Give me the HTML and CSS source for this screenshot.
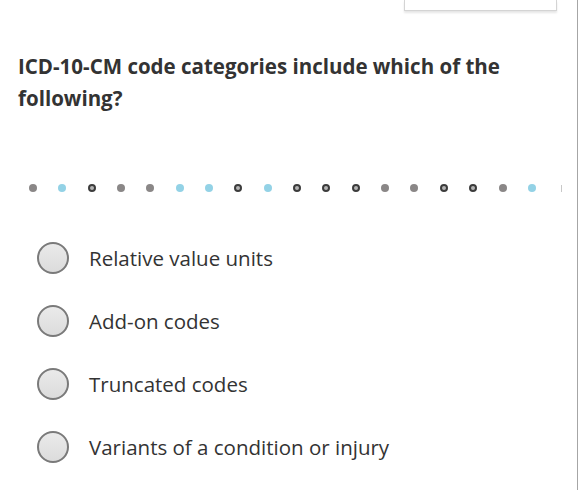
FILE: index.html
```html
<!DOCTYPE html>
<html>
<head>
<meta charset="utf-8">
<link rel="stylesheet" href="styles.css">
</head>
<body>
<div class="page">
  <div class="topbar"><div class="topbox"></div></div>
  <h1 class="question">ICD-10-CM code categories include which of the following?</h1>
  <div class="dots">
    <span class="dot gray"></span>
    <span class="dot blue"></span>
    <span class="dot ring"></span>
    <span class="dot gray"></span>
    <span class="dot gray"></span>
    <span class="dot blue"></span>
    <span class="dot blue"></span>
    <span class="dot ring"></span>
    <span class="dot blue"></span>
    <span class="dot ring"></span>
    <span class="dot ring"></span>
    <span class="dot ring"></span>
    <span class="dot gray"></span>
    <span class="dot gray"></span>
    <span class="dot ring"></span>
    <span class="dot ring"></span>
    <span class="dot gray"></span>
    <span class="dot blue"></span>
    <span class="tick"></span>
  </div>
  <ul class="options">
    <li class="option"><span class="radio"></span><span class="label">Relative value units</span></li>
    <li class="option"><span class="radio"></span><span class="label">Add-on codes</span></li>
    <li class="option"><span class="radio"></span><span class="label">Truncated codes</span></li>
    <li class="option"><span class="radio"></span><span class="label">Variants of a condition or injury</span></li>
  </ul>
</div>
</body>
</html>
```
FILE: styles.css
```css
* { box-sizing: border-box; }
html, body { margin: 0; padding: 0; background: #fff; }
body { font-family: "Open Sans", "Liberation Sans", sans-serif; color: #333; }
.page {
  width: 578px;
  height: 490px;
  border-right: 1px solid #a6a6a6;
  overflow: hidden;
}
.topbar {
  height: 13px;
  display: flex;
  justify-content: flex-end;
  padding-right: 20px;
}
.topbox {
  width: 153px;
  height: 11px;
  border: 1px solid #d4d4d4;
  border-top: none;
  background: #fff;
  box-shadow: 0 2px 2px rgba(0,0,0,0.10);
}
.question {
  margin: 37px 0 0 18px;
  width: 530px;
  font-size: 20.5px;
  line-height: 32px;
  font-weight: 700;
  color: #333;
}
.dots {
  margin-top: 70px;
  height: 8px;
  display: flex;
  align-items: center;
  gap: 21.35px;
  padding-left: 29px;
}
.dot {
  flex: none;
  width: 8px;
  height: 8px;
  border-radius: 50%;
}
.dot.gray { background: #8a8787; }
.dot.blue { background: #93d2e6; }
.dot.ring { background: #b5b5b5; border: 2px solid #3c3c3c; }
.tick {
  flex: none;
  width: 1px;
  height: 7px;
  background: #c8c8c8;
  margin-left: 4px;
}
.options {
  list-style: none;
  margin: 34px 0 0 0;
  padding: 0 0 0 37px;
}
.option {
  height: 63px;
  display: flex;
  align-items: center;
}
.radio {
  flex: none;
  width: 32px;
  height: 32px;
  border-radius: 50%;
  border: 2px solid #7a7a7a;
  background: linear-gradient(#eaeaea, #dcdcdc);
}
.label {
  margin-left: 20px;
  font-size: 20.5px;
  color: #333;
}
```
